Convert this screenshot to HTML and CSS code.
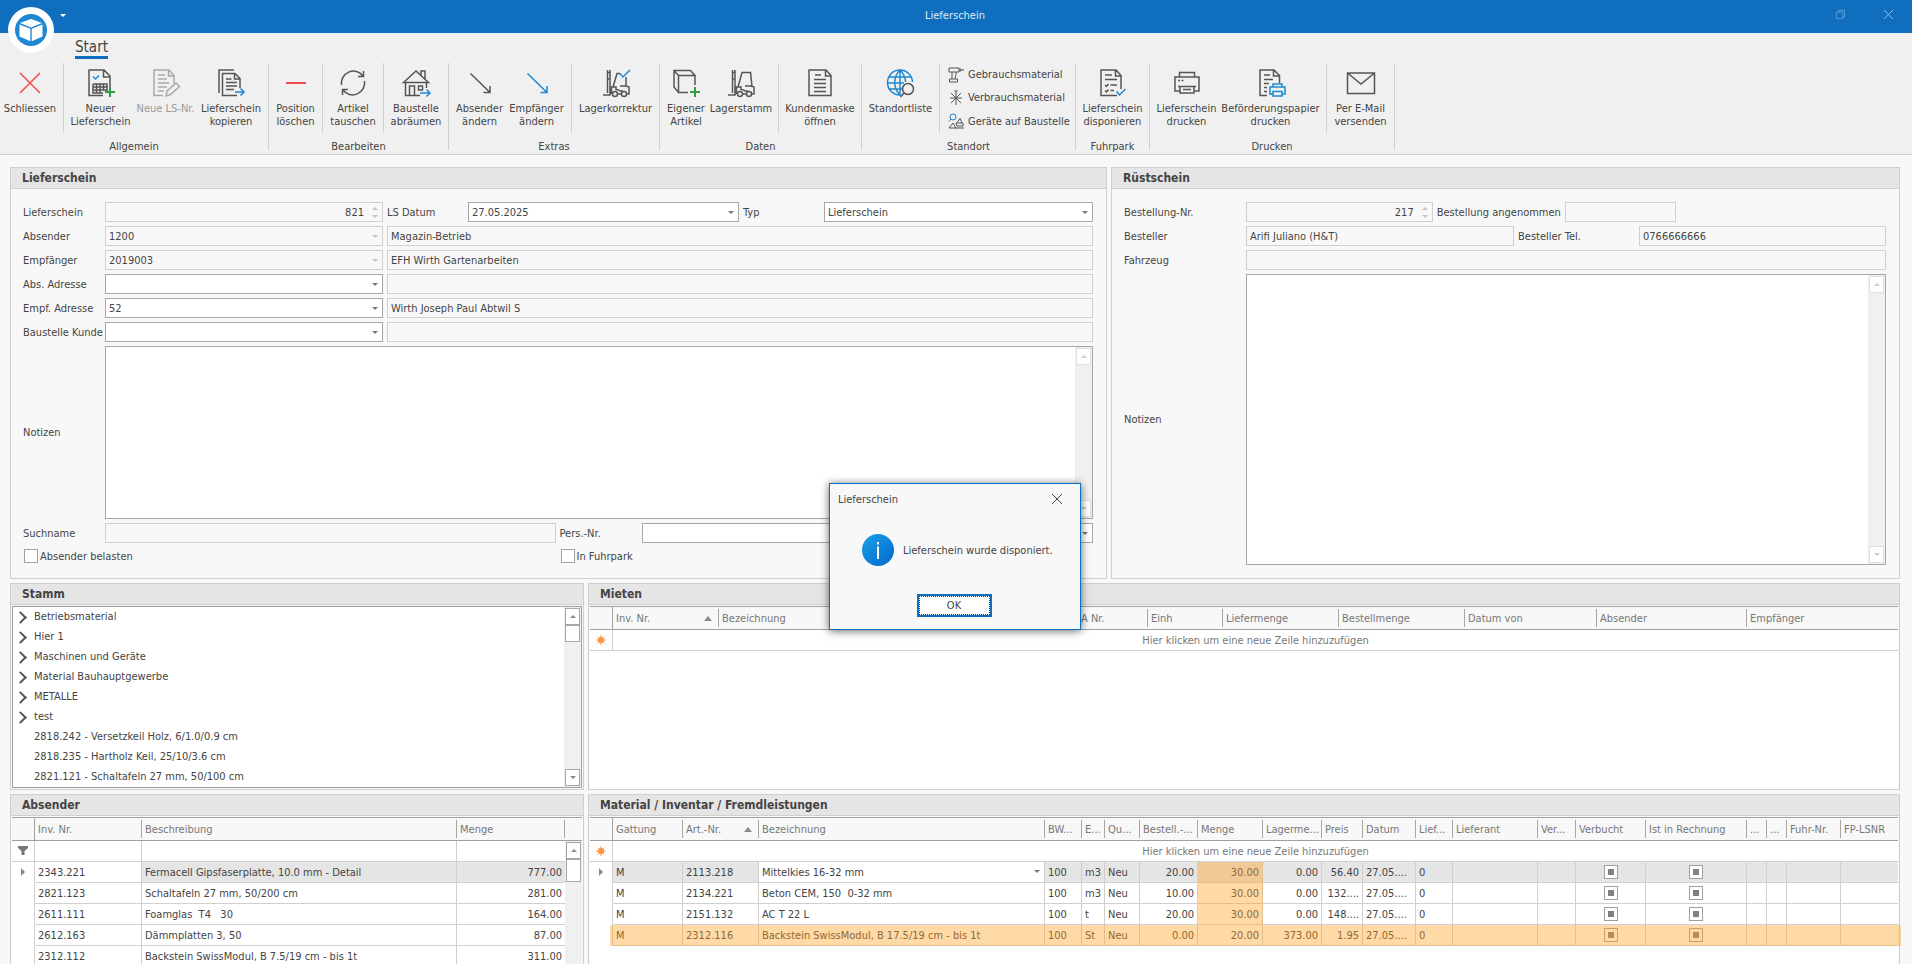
FILE: index.html
```
<!DOCTYPE html>
<html lang="de">
<head>
<meta charset="utf-8">
<title>Lieferschein</title>
<link rel="stylesheet" href="styles.css">
</head>
<body>
<header class="titlebar">
  <div class="titlebar-left">
    <svg class="logo" viewBox="0 0 46 46" aria-hidden="true"><circle cx="23" cy="23" r="23" fill="#fff"/><circle cx="23" cy="23" r="16" fill="#1e88d2"/><path d="M23 12l11 4-11 4.500-11-4.500zM11.500 17.500l10.800 4.300v12.500l-10.800-4.800zM34.500 17.500l-10.800 4.300v12.500l10.800-4.800z" fill="#fff"/></svg>
    <span class="caret caret-white"></span>
  </div>
  <h1 class="title">Lieferschein</h1>
  <div class="window-buttons">
    <button type="button" aria-label="Wiederherstellen"><svg viewBox="0 0 12 12"><path d="M1.500 3.500h7v7h-7zM3.500 3.500v-2h7v7h-2" /></svg></button>
    <button type="button" aria-label="Fenster schliessen"><svg class="bright" viewBox="0 0 12 12"><path d="M1 1l10 10M11 1L1 11"/></svg></button>
  </div>
</header>

<nav class="ribbon">
  <div class="tabs"><button type="button" class="tab">Start</button></div>
  <div class="groups">
    <section class="group">
      <div class="clusters">
        <div class="cluster cluster-first">
          <button type="button" class="tool w58"><svg viewBox="0 0 32 32" class="red"><path d="M6 6l20 20M26 6L6 26"/></svg>Schliessen</button>
        </div>
        <div class="cluster">
          <button type="button" class="tool w65"><svg viewBox="0 0 32 32"><path d="M18 28.500H4V3h15l6 6v12M18.500 3v7H25M8 17h14v9M8 17v9h10M8 20h14M8 23h14M11.500 17v9M15 17v9M18.500 17v6"/><path class="blue" d="M8 9.500l2.500 2.500L14 8.500"/><path class="green" d="M25 20v10M20 25h10"/></svg>Neuer<br>Lieferschein</button>
          <button type="button" class="tool w65" disabled><svg viewBox="0 0 32 32"><path d="M13 28.500H4V3h15l5 5.500v8M18.500 3v6H24M8 8h7M8 12h9M8 16h11M8 20h9M8 24h6M16 29l1-5 9-8 3.500 3.500-9 8z"/></svg>Neue LS-Nr.</button>
          <button type="button" class="tool w66"><svg viewBox="0 0 32 32"><path d="M19 3H4v23M22 28.500H7.500V6.500H20l5 5V21M19.500 6.500V12H25M11 12h5.500M11 15.500h11M11 19h11M11 22.500h8"/><path class="blue" d="M20 25h9M25.500 21.500L29 25l-3.500 3.500"/></svg>Lieferschein<br>kopieren</button>
        </div>
      </div>
      <h2>Allgemein</h2>
    </section>
    <section class="group">
      <div class="clusters">
        <div class="cluster">
          <button type="button" class="tool w45"><svg viewBox="0 0 32 32" class="red"><path d="M6 16h20" stroke-width="2"/></svg>Position<br>löschen</button>
        </div>
        <div class="cluster">
          <button type="button" class="tool w52"><svg viewBox="0 0 32 32"><path d="M4.500 18A12 12 0 0 1 26 9M27.500 14A12 12 0 0 1 6 23M26.500 4v5.500H21M5.500 28v-5.500H11"/></svg>Artikel<br>tauschen</button>
        </div>
        <div class="cluster">
          <button type="button" class="tool w56"><svg viewBox="0 0 32 32"><path d="M3.500 15.500L16 4l12.500 11.500zM21 8V4h4v7.500M5.500 16v12.500H20M26.500 16v5M9.500 28V19h5v9M18.500 19h4v4h-4z"/><path class="blue" d="M20 26h10M26.500 22.500L30 26l-3.500 3.500"/></svg>Baustelle<br>abräumen</button>
        </div>
      </div>
      <h2>Bearbeiten</h2>
    </section>
    <section class="group">
      <div class="clusters">
        <div class="cluster">
          <button type="button" class="tool w53"><svg viewBox="0 0 32 32"><path d="M6.500 6.500L25.500 25M26 19v6.500h-6.500"/></svg>Absender<br>ändern</button>
          <button type="button" class="tool w61"><svg viewBox="0 0 32 32"><path class="blue" d="M6.500 6.500L25.500 25M26 19v6.500h-6.500"/></svg>Empfänger<br>ändern</button>
        </div>
        <div class="cluster">
          <button type="button" class="tool w79"><svg viewBox="0 0 32 32"><path d="M3 28h7V3M7.500 3v23M7.500 5.500H10M7.500 12H10M13 20l4-13.500h3M11.500 27V20h4.500v2.500c2.500 0 3 .500 4 1.500h3M26 10v9l3 1v7h-2M18 27h3M20 19h6"/><circle cx="15" cy="27" r="2.500"/><circle cx="24" cy="27" r="2.500"/><path class="blue" d="M20 6.500L23 10l7-7"/></svg>Lagerkorrektur</button>
        </div>
      </div>
      <h2>Extras</h2>
    </section>
    <section class="group">
      <div class="clusters">
        <div class="cluster">
          <button type="button" class="tool w44"><svg viewBox="0 0 32 32"><path d="M18 25.500H8.500v-17H25V18M8.500 25.500L4 20V3.500h16.500l4.500 5M4 3.500l4.500 5"/><path class="green" d="M25 20v10M20 25h10"/></svg>Eigener<br>Artikel</button>
          <button type="button" class="tool w66"><svg viewBox="0 0 32 32"><path d="M3 28h7V3M7.500 3v23M7.500 5.500H10M7.500 12H10M13 20l4-14.500h8.500L27 19M11.500 27V20h4.500v2.500c2.500 0 3 .500 4 1.500h3M20 19h6l3 1v7h-2M18 27h3"/><circle cx="15" cy="27" r="2.500"/><circle cx="24" cy="27" r="2.500"/></svg>Lagerstamm</button>
        </div>
        <div class="cluster">
          <button type="button" class="tool w74"><svg viewBox="0 0 32 32"><path d="M5 3h17l5 5.500v20H5zM21.500 3v6H27M11 8h6M10 12.500h12M10 16.500h12M10 20.500h12M10 24.500h12"/></svg>Kundenmaske<br>öffnen</button>
        </div>
      </div>
      <h2>Daten</h2>
    </section>
    <section class="group">
      <div class="clusters">
        <div class="cluster">
          <button type="button" class="tool w69"><svg viewBox="0 0 32 32"><g class="blue"><path d="M16 28A12.500 12.500 0 1 1 27.500 15M15 3C8 10 8 21 15 28M15 3c4 4 5.500 8 5.500 12M15 3v25M4 10h22M3 16h16M4 22h13"/></g><circle cx="23" cy="22" r="5.500"/><path d="M19 26l-3.500 4"/></svg>Standortliste</button>
        </div>
        <div class="cluster cluster-list">
          <button type="button" class="tool-row"><svg viewBox="0 0 16 16"><path d="M1 1h10v4H1zM11 2h2v2h-2M13 3h3M4 5v7M8 5v2.500L7 12M1.500 12h8v3h-8z"/></svg>Gebrauchsmaterial</button>
          <button type="button" class="tool-row"><svg viewBox="0 0 16 16"><path d="M8 1v14M8 8L3 3M8 8l5-5M8 8l-5 5M8 8l5 5M2 8h12M6.500 1h3"/></svg>Verbrauchsmaterial</button>
          <button type="button" class="tool-row"><svg viewBox="0 0 16 16"><path d="M1 15l4-5 3 5zM9 9.500l3-4 2 4.500M8 10h7v3H9zM7 15h9"/><circle class="blue" cx="5" cy="4" r="3"/><path class="blue" d="M3 6L1 8.500"/></svg>Geräte auf Baustelle</button>
        </div>
      </div>
      <h2>Standort</h2>
    </section>
    <section class="group">
      <div class="clusters">
        <div class="cluster">
          <button type="button" class="tool w65"><svg viewBox="0 0 32 32"><path d="M20 28.500H4V3h15l5 5.500V22M18.500 3v6H24M8 8h7M8 12.500h12M13.500 18H20M13.500 23.500H17M8 18l1.500 1.500L11.500 17M8 23.500L9.500 25l2-2.500"/><path class="blue" d="M19.500 24.500l3 3.500 6-6"/></svg>Lieferschein<br>disponieren</button>
        </div>
      </div>
      <h2>Fuhrpark</h2>
    </section>
    <section class="group">
      <div class="clusters">
        <div class="cluster">
          <button type="button" class="tool w65"><svg viewBox="0 0 32 32"><path d="M8.500 10V5.500h15V10M9 24H4V10h24v14h-5M7 19.500h18M9 19.500v6.500h14v-6.500M12 22.500h8M7 13.500h2M10.500 13.500h2"/></svg>Lieferschein<br>drucken</button>
          <button type="button" class="tool w103"><svg viewBox="0 0 32 32"><path d="M12 28.500H5V3h14l5.500 5.500V16M18.500 3v6H24M9 8h6M9 12.500h9M9 16.500h5M9 20.500h3M9 24.500h3"/><path class="blue" d="M18 20v-3h9v3M18 27h-3v-7h15v7h-3M18 24.500h9V29h-9z"/></svg>Beförderungspapier<br>drucken</button>
        </div>
        <div class="cluster">
          <button type="button" class="tool w59"><svg viewBox="0 0 32 32"><path d="M2.500 6h27v20.500h-27zM2.500 6L16 17 29.500 6"/></svg>Per E-Mail<br>versenden</button>
        </div>
      </div>
      <h2>Drucken</h2>
    </section>
  </div>
</nav>

<main class="workspace">
  <div class="row row-forms">
    <section class="panel">
      <h3 class="panel-title">Lieferschein</h3>
      <div class="form form-delivery">
        <label for="ls">Lieferschein</label>
        <div class="field spin off"><input id="ls" class="num" value="821" disabled></div>
        <label for="datum">LS Datum</label>
        <div class="field combo"><input id="datum" value="27.05.2025"></div>
        <label for="typ">Typ</label>
        <div class="field combo"><select id="typ"><option>Lieferschein</option></select></div>

        <label for="abs">Absender</label>
        <div class="field combo off"><select id="abs" disabled><option>1200</option></select></div>
        <div class="field off span4"><input aria-label="Absender Name" value="Magazin-Betrieb" disabled></div>

        <label for="empf">Empfänger</label>
        <div class="field combo off"><select id="empf" disabled><option>2019003</option></select></div>
        <div class="field off span4"><input aria-label="Empfänger Name" value="EFH Wirth Gartenarbeiten" disabled></div>

        <label for="absadr">Abs. Adresse</label>
        <div class="field combo"><select id="absadr"><option></option></select></div>
        <div class="field off span4"><input aria-label="Abs. Adresse Name" disabled></div>

        <label for="empfadr">Empf. Adresse</label>
        <div class="field combo"><select id="empfadr"><option>52</option></select></div>
        <div class="field off span4"><input aria-label="Empf. Adresse Name" value="Wirth Joseph Paul Abtwil S" disabled></div>

        <label for="baust">Baustelle Kunde</label>
        <div class="field combo"><select id="baust"><option></option></select></div>
        <div class="field off span4"><input aria-label="Baustelle Kunde Name" disabled></div>

        <label for="notiz">Notizen</label>
        <div class="memo span5"><textarea id="notiz"></textarea><div class="scroll dim"><i class="up"></i><i class="down"></i></div></div>
      </div>
      <div class="form form-person">
        <label for="such">Suchname</label>
        <div class="field off"><input id="such" disabled></div>
        <label for="pers">Pers.-Nr.</label>
        <div class="field combo"><select id="pers"><option></option></select></div>
        <label class="check span2"><input type="checkbox">Absender belasten</label>
        <label class="check span2"><input type="checkbox">In Fuhrpark</label>
      </div>
    </section>

    <section class="panel">
      <h3 class="panel-title">Rüstschein</h3>
      <div class="form form-order">
        <label for="bnr">Bestellung-Nr.</label>
        <div class="inline inline-a">
          <div class="field spin off"><input id="bnr" class="num" value="217" disabled></div>
          <label for="bang">Bestellung angenommen</label>
          <div class="field off"><input id="bang" disabled></div>
        </div>
        <label for="best">Besteller</label>
        <div class="inline inline-b">
          <div class="field off"><input id="best" value="Arifi Juliano (H&amp;T)" disabled></div>
          <label for="tel">Besteller Tel.</label>
          <div class="field off"><input id="tel" value="0766666666" disabled></div>
        </div>
        <label for="fahr">Fahrzeug</label>
        <div class="field off"><input id="fahr" disabled></div>
        <label for="rnotiz">Notizen</label>
        <div class="memo"><textarea id="rnotiz"></textarea><div class="scroll dim"><i class="up"></i><i class="down"></i></div></div>
      </div>
    </section>
  </div>

  <div class="row row-stock">
    <section class="panel">
      <h3 class="panel-title">Stamm</h3>
      <div class="tree">
        <ul>
          <li class="node">Betriebsmaterial</li>
          <li class="node">Hier 1</li>
          <li class="node">Maschinen und Geräte</li>
          <li class="node">Material Bauhauptgewerbe</li>
          <li class="node">METALLE</li>
          <li class="node">test</li>
          <li>2818.242 - Versetzkeil Holz, 6/1.0/0.9 cm</li>
          <li>2818.235 - Hartholz Keil, 25/10/3.6 cm</li>
          <li>2821.121 - Schaltafeln 27 mm, 50/100 cm</li>
        </ul>
        <div class="scroll"><i class="up"></i><b></b><i class="down"></i></div>
      </div>
    </section>
    <section class="panel">
      <h3 class="panel-title">Mieten</h3>
      <div class="grid">
        <table>
          <colgroup><col class="c23"><col class="c106"><col><col class="c70"><col class="c75"><col class="c116"><col class="c126"><col class="c132"><col class="c150"><col class="c151"></colgroup>
          <thead><tr><th class="mark"></th><th class="sorted">Inv. Nr.</th><th>Bezeichnung</th><th>A Nr.</th><th>Einh</th><th>Liefermenge</th><th>Bestellmenge</th><th>Datum von</th><th>Absender</th><th>Empfänger</th></tr></thead>
          <tbody><tr class="new"><td class="mark"><svg class="star" viewBox="0 0 10 10"><circle cx="5" cy="5" r="2.600"/><path d="M5 0v10M0 5h10M1.500 1.500l7 7M8.500 1.500l-7 7"/></svg></td><td colspan="9">Hier klicken um eine neue Zeile hinzuzufügen</td></tr></tbody>
        </table>
      </div>
    </section>
  </div>

  <div class="row row-lists">
    <section class="panel">
      <h3 class="panel-title">Absender</h3>
      <div class="grid">
        <table>
          <colgroup><col class="c23"><col class="c107"><col><col class="c109"></colgroup>
          <thead><tr><th class="mark"></th><th>Inv. Nr.</th><th>Beschreibung</th><th>Menge</th></tr></thead>
          <tbody>
            <tr class="filter"><td class="mark"><svg class="funnel" viewBox="0 0 10 10"><path d="M0 0h10v2L6.500 5v4h-3V5L0 2z"/></svg></td><td></td><td></td><td></td></tr>
            <tr class="current"><td class="mark"><span class="pointer"></span></td><td class="plain">2343.221</td><td>Fermacell Gipsfaserplatte, 10.0 mm - Detail</td><td class="r">777.00</td></tr>
            <tr><td class="mark"></td><td>2821.123</td><td>Schaltafeln 27 mm, 50/200 cm</td><td class="r">281.00</td></tr>
            <tr><td class="mark"></td><td>2611.111</td><td>Foamglas&nbsp; T4 &nbsp; 30</td><td class="r">164.00</td></tr>
            <tr><td class="mark"></td><td>2612.163</td><td>Dämmplatten 3, 50</td><td class="r">87.00</td></tr>
            <tr><td class="mark"></td><td>2312.112</td><td>Backstein SwissModul, B 7.5/19 cm - bis 1t</td><td class="r">311.00</td></tr>
          </tbody>
        </table>
        <div class="side"><div class="side-head"></div><div class="scroll"><i class="up"></i><b class="long"></b></div></div>
      </div>
    </section>
    <section class="panel">
      <h3 class="panel-title">Material / Inventar / Fremdleistungen</h3>
      <div class="grid">
        <table>
          <colgroup><col class="c23"><col class="c70"><col class="c76"><col><col class="c37"><col class="c23"><col class="c35"><col class="c58"><col class="c65"><col class="c59"><col class="c41"><col class="c53"><col class="c37"><col class="c85"><col class="c38"><col class="c70"><col class="c101"><col class="c20"><col class="c20"><col class="c54"><col class="c57"></colgroup>
          <thead><tr><th class="mark"></th><th>Gattung</th><th class="sorted">Art.-Nr.</th><th>Bezeichnung</th><th>BW...</th><th>E...</th><th>Qu...</th><th>Bestell.-...</th><th>Menge</th><th>Lagerme...</th><th>Preis</th><th>Datum</th><th>Lief...</th><th>Lieferant</th><th>Ver...</th><th>Verbucht</th><th>Ist in Rechnung</th><th>...</th><th>...</th><th>Fuhr-Nr.</th><th>FP-LSNR</th></tr></thead>
          <tbody>
            <tr class="new"><td class="mark"><svg class="star" viewBox="0 0 10 10"><circle cx="5" cy="5" r="2.600"/><path d="M5 0v10M0 5h10M1.500 1.500l7 7M8.500 1.500l-7 7"/></svg></td><td colspan="20">Hier klicken um eine neue Zeile hinzuzufügen</td></tr>
            <tr class="current"><td class="mark"><span class="pointer"></span></td><td>M</td><td>2113.218</td><td class="plain editing">Mittelkies 16-32 mm</td><td>100</td><td>m3</td><td>Neu</td><td class="r">20.00</td><td class="r tint">30.00</td><td class="r">0.00</td><td class="r">56.40</td><td>27.05....</td><td>0</td><td></td><td></td><td class="c"><input type="checkbox" aria-label="Verbucht" class="mixed"></td><td class="c"><input type="checkbox" aria-label="Ist in Rechnung" class="mixed"></td><td></td><td></td><td></td><td></td></tr>
            <tr><td class="mark"></td><td>M</td><td>2134.221</td><td>Beton CEM, 150&nbsp; 0-32 mm</td><td>100</td><td>m3</td><td>Neu</td><td class="r">10.00</td><td class="r tint">30.00</td><td class="r">0.00</td><td class="r">132....</td><td>27.05....</td><td>0</td><td></td><td></td><td class="c"><input type="checkbox" aria-label="Verbucht" class="mixed"></td><td class="c"><input type="checkbox" aria-label="Ist in Rechnung" class="mixed"></td><td></td><td></td><td></td><td></td></tr>
            <tr><td class="mark"></td><td>M</td><td>2151.132</td><td>AC T 22 L</td><td>100</td><td>t</td><td>Neu</td><td class="r">20.00</td><td class="r tint">30.00</td><td class="r">0.00</td><td class="r">148....</td><td>27.05....</td><td>0</td><td></td><td></td><td class="c"><input type="checkbox" aria-label="Verbucht" class="mixed"></td><td class="c"><input type="checkbox" aria-label="Ist in Rechnung" class="mixed"></td><td></td><td></td><td></td><td></td></tr>
            <tr class="tinted"><td class="mark"></td><td class="tint first">M</td><td class="tint">2312.116</td><td class="tint">Backstein SwissModul, B 17.5/19 cm - bis 1t</td><td class="tint">100</td><td class="tint">St</td><td class="tint">Neu</td><td class="r tint">0.00</td><td class="r tint">20.00</td><td class="r tint">373.00</td><td class="r tint">1.95</td><td class="tint">27.05....</td><td class="tint">0</td><td class="tint"></td><td class="tint"></td><td class="c tint"><input type="checkbox" aria-label="Verbucht" class="mixed"></td><td class="c tint"><input type="checkbox" aria-label="Ist in Rechnung" class="mixed"></td><td class="tint"></td><td class="tint"></td><td class="tint"></td><td class="tint last"></td></tr>
          </tbody>
        </table>
      </div>
    </section>
  </div>
</main>

<dialog open class="message" aria-labelledby="msg-title">
  <div class="message-head">
    <h2 id="msg-title">Lieferschein</h2>
    <button type="button" aria-label="Schliessen"><svg viewBox="0 0 12 12"><path d="M1 1l10 10M11 1L1 11"/></svg></button>
  </div>
  <div class="message-body">
    <svg class="info" viewBox="0 0 32 32" aria-hidden="true"><defs><linearGradient id="ig" x1="0" y1="0" x2="1" y2="1"><stop offset="0" stop-color="#1ba1e8"/><stop offset="1" stop-color="#0068cc"/></linearGradient></defs><circle cx="16" cy="16" r="16" fill="url(#ig)"/><path d="M15 8h2v2.500h-2zM15 12.500h2V25h-2z" fill="#fff"/></svg>
    <p>Lieferschein wurde disponiert.</p>
  </div>
  <div class="message-foot"><button type="button" class="ok">OK</button></div>
</dialog>
</body>
</html>
```
FILE: styles.css
```
* { box-sizing: border-box; }

body {
  margin: 0;
  height: 100vh;
  overflow: hidden;
  display: flex;
  flex-direction: column;
  position: relative;
  background: #f8f8f8;
  color: #444;
  font: 11px/13px "DejaVu Sans Condensed", "DejaVu Sans", sans-serif;
}

button, input, select, textarea { font: inherit; color: inherit; }
button { border: 0; background: none; padding: 0; }
h1, h2, h3, p, ul { margin: 0; padding: 0; font-size: 11px; font-weight: normal; }
svg { display: block; fill: none; stroke: none; }

/* Title bar */
.titlebar {
  display: grid;
  grid-template-columns: 1fr auto 1fr;
  align-items: center;
  height: 33px;
  flex: none;
  padding: 0 16px 0 8px;
  background: #106ebe;
  color: #dcebf8;
}
.titlebar-left { display: flex; gap: 6px; height: 33px; padding-top: 7px; position: relative; z-index: 1; }
.logo { width: 46px; height: 46px; flex: none; }
.caret { width: 0; height: 0; border: 3px solid transparent; border-top-color: #888; border-bottom: 0; }
.caret-white { border-top-color: #fff; margin-top: 7px; }
.title { padding: 0 0 3px 6px; }
.window-buttons { display: flex; justify-content: flex-end; gap: 33px; }
.window-buttons button { padding: 0 2px 4px; }
.window-buttons svg { width: 11px; height: 11px; stroke: #5f9fd8; }
.window-buttons .bright { stroke: #9cc4e8; }

/* Ribbon */
.ribbon { flex: none; background: #f0f0f0; border-bottom: 1px solid #d0d0d0; }
.tabs { display: flex; padding: 5px 0 0 75px; height: 30px; }
.tab { height: 21px; font-size: 15px; line-height: 18px; border-bottom: 3px solid #106ebe; }
.groups { display: flex; height: 91px; }
.group { height: 87px; display: flex; flex-direction: column; border-right: 1px solid #d0d0d0; }
.clusters { display: flex; height: 70px; }
.cluster { display: flex; padding: 0 4px; border-right: 1px solid #d0d0d0; }
.cluster:last-child { border-right: 0; }
.cluster-first { padding-left: 1px; }
.group h2 { text-align: center; padding-top: 7px; }
.tool {
  display: flex;
  flex-direction: column;
  align-items: center;
  height: 70px;
  padding-top: 4px;
  text-align: center;
  white-space: nowrap;
}
.tool svg { width: 32px; height: 32px; margin: 0 auto 3px; }
.tool svg, .tool-row svg { stroke: #555; stroke-width: 1.5; }
.ribbon svg.red { stroke: #ef4b4b; }
.blue { stroke: #1e88d2; }
.green { stroke: #2f9e44; stroke-width: 2; }
.tool:disabled { color: #999; }
.tool:disabled svg { stroke: #aaa; }
.w44 { width: 44px; } .w45 { width: 45px; } .w52 { width: 52px; } .w53 { width: 53px; }
.w56 { width: 56px; } .w58 { width: 58px; } .w59 { width: 59px; } .w61 { width: 61px; }
.w65 { width: 65px; } .w66 { width: 66px; } .w69 { width: 69px; } .w74 { width: 74px; }
.w79 { width: 79px; } .w103 { width: 103px; }
.cluster-list { flex-direction: column; width: 135px; padding-left: 8px; }
.tool-row { display: flex; align-items: center; gap: 4px; height: 24px; white-space: nowrap; }
.tool-row svg { width: 16px; height: 16px; stroke-width: 1; flex: none; }

/* Workspace */
.workspace { flex: 1; min-height: 0; display: flex; flex-direction: column; gap: 4px; padding: 12px 12px 0 10px; }
.row { display: grid; gap: 4px; flex: none; }
.row-forms { grid-template-columns: minmax(0, 1097fr) minmax(0, 789fr); }
.row-stock, .row-lists { grid-template-columns: minmax(0, 574fr) minmax(0, 1312fr); }
.row-stock { height: 207px; }
.row-lists { flex: 1; }
.row-lists .panel { border-bottom: 0; }
.panel { border: 1px solid #cfcfcf; display: flex; flex-direction: column; min-height: 0; }
.panel-title {
  flex: none;
  height: 21px;
  padding: 0 11px;
  line-height: 20px;
  font-size: 12px;
  font-weight: bold;
  background: #e5e5e5;
  border-bottom: 1px solid #cfcfcf;
}

/* Forms */
.form { display: grid; gap: 4px; align-items: center; padding: 0 13px 0 12px; white-space: nowrap; }
.form-delivery {
  padding-top: 13px;
  grid-template-columns: 78px minmax(0, 278fr) 77px minmax(0, 271fr) 77px minmax(0, 269fr);
}
.form-person {
  padding-top: 4px;
  padding-bottom: 13px;
  grid-template-columns: 78px minmax(0, 451fr) 78px minmax(0, 452fr);
}
.form-order {
  flex: 1;
  padding-top: 13px;
  padding-bottom: 13px;
  grid-template-columns: 118px minmax(0, 1fr);
  grid-template-rows: 20px 20px 20px 1fr;
}
.inline { display: grid; gap: 4px; align-items: center; }
.inline-a { grid-template-columns: 189fr auto 112fr 209fr; }
.inline-b { grid-template-columns: 268fr 117px 247fr; }
.span2 { grid-column: span 2; }
.span4 { grid-column: span 4; }
.span5 { grid-column: span 5; }
.field { position: relative; height: 20px; background: #fff; border: 1px solid #a6a6a6; }
.field input, .field select {
  display: block;
  width: 100%;
  height: 18px;
  padding: 0 3px;
  border: 0;
  background: none;
  appearance: none;
  opacity: 1;
  outline: 0;
}
.field.off { background: #f8f8f8; border-color: #d0d0d0; }
.field .num { text-align: right; padding-right: 18px; }
.combo::after, .spin::after, .spin::before, .editing::after {
  content: "";
  position: absolute;
  right: 4px;
  top: 8px;
  border: 3px solid transparent;
  border-top-color: #777;
  border-bottom: 0;
}
.off::after { border-top-color: #c4c4c4; }
.spin::after { top: 12px; }
.spin::before { top: 4px; border-top: 0; border-bottom: 3px solid #c4c4c4; }
.memo { display: flex; background: #fff; border: 1px solid #a6a6a6; height: 173px; }
.memo textarea { flex: 1; min-width: 0; border: 0; resize: none; background: none; outline: 0; }
.form-order .memo { height: 100%; min-height: 100px; }
.check { display: flex; align-items: center; gap: 2px; height: 18px; padding-left: 1px; }
input[type="checkbox"] { appearance: none; width: 14px; height: 14px; margin: 0; background: #fff; border: 1px solid #a0a0a0; flex: none; }

/* Scroll bars */
.scroll { width: 17px; flex: none; background: #f0f0f0; padding: 1px; display: flex; flex-direction: column; }
.scroll i, .scroll b { background: #fff; border: 1px solid #a6a6a6; height: 17px; display: flex; align-items: center; justify-content: center; flex: none; }
.scroll .long { height: 23px; }
.scroll i::after { content: ""; border: 3px solid transparent; }
.scroll .up::after { border-top: 0; border-bottom-color: #888; }
.scroll .down::after { border-bottom: 0; border-top-color: #888; }
.scroll .down { margin-top: auto; }
.dim i { border-color: #e0e0e0; }
.dim .up::after { border-bottom-color: #ccc; }
.dim .down::after { border-top-color: #ccc; }

/* Tree */
.tree { flex: 1; min-height: 0; margin: 1px; display: flex; background: #fff; border: 1px solid #a0a0a0; }
.tree ul { flex: 1; list-style: none; padding: 0 0 0 21px; overflow: hidden; }
.tree li { height: 20px; line-height: 20px; position: relative; }
.node::before {
  content: "";
  position: absolute;
  left: -18px;
  top: 6px;
  width: 7px;
  height: 7px;
  border: solid #555;
  border-width: 2px 2px 0 0;
  transform: rotate(45deg);
}

/* Data grids */
.grid { flex: 1; min-height: 0; margin: 1px 1px 0; background: #fff; border-top: 1px solid #a0a0a0; display: flex; align-items: flex-start; }
table { flex: 1; width: 100%; min-width: 0; table-layout: fixed; border-collapse: separate; border-spacing: 0; }
th, td { padding: 0 3px; text-align: left; white-space: nowrap; overflow: hidden; height: 21px; border-bottom: 1px solid #d0d0d0; }
th {
  height: 23px;
  font-weight: normal;
  color: #777;
  border-bottom-color: #a0a0a0;
  background: linear-gradient(#a6a6a6, #a6a6a6) right center / 1px 18px no-repeat #f8f8f8;
}
th.mark { background: #f8f8f8; border-right: 1px solid #a0a0a0; }
.row-stock th:last-child, .row-lists .panel:last-child th:last-child { background: #f8f8f8; }
th.sorted { position: relative; }
th.sorted::after { content: ""; position: absolute; right: 7px; top: 9px; border: 4px solid transparent; border-top: 0; border-bottom: 5px solid #888; }
td { border-right: 1px solid #d0d0d0; }
tr td:last-child { border-right: 0; }
td.mark { padding: 0; border-bottom-color: transparent; }
.new td { text-align: center; color: #777; }
.new td.mark, .filter td.mark { border-bottom-color: #d0d0d0; }
.current td { background: #e5e5e5; }
.current td.mark, .current td.plain { background: #fff; }
.editing { position: relative; }
.r { text-align: right; }
.c input { display: block; margin: 0 auto; }
.c .mixed { background: linear-gradient(#808080, #808080) center / 6px 6px no-repeat #fff; }
.tint { position: relative; overflow: visible; }
.tint::after { content: ""; position: absolute; inset: 0 -1px -1px 0; background: rgba(255, 160, 32, .4); }
.tint.first::after { left: -3px; }
.tint.last::after { right: -3px; }
.star { width: 10px; height: 10px; margin: 0 auto; fill: #f79646; stroke: #f79646; stroke-width: 1; }
.funnel { width: 10px; height: 10px; margin: 0 auto; fill: #777; }
.pointer { display: block; width: 0; height: 0; margin: 0 auto; border: 4px solid transparent; border-left-color: #888; border-right: 0; }
.side { align-self: stretch; width: 17px; display: flex; flex-direction: column; }
.side-head { height: 23px; background: #f8f8f8; border-bottom: 1px solid #a0a0a0; }
.side .scroll { flex: 1; }
.c20 { width: 20px; } .c23 { width: 23px; } .c35 { width: 35px; } .c37 { width: 37px; }
.c38 { width: 38px; } .c41 { width: 41px; } .c53 { width: 53px; } .c54 { width: 54px; }
.c57 { width: 57px; } .c58 { width: 58px; } .c59 { width: 59px; } .c65 { width: 65px; }
.c70 { width: 70px; } .c75 { width: 75px; } .c76 { width: 76px; } .c85 { width: 85px; }
.c101 { width: 101px; } .c106 { width: 106px; } .c107 { width: 107px; } .c109 { width: 108px; }
.c116 { width: 116px; } .c126 { width: 126px; } .c132 { width: 132px; } .c150 { width: 150px; }
.c151 { width: 151px; }

/* Message box */
.message {
  position: absolute;
  top: 483px;
  left: 50%;
  right: auto;
  margin: 0 0 0 -127px;
  padding: 0;
  width: 252px;
  color: inherit;
  background: #f8f8f8;
  border: 1px solid #106ebe;
  box-shadow: 0 1px 8px rgba(0, 0, 0, .6);
}
.message-head { display: flex; justify-content: space-between; align-items: center; height: 30px; padding: 0 17px 0 8px; }
.message-head svg { width: 12px; height: 12px; stroke: #444; }
.message-body { display: flex; align-items: center; gap: 9px; padding: 20px 0 28px 32px; white-space: nowrap; }
.info { width: 32px; height: 32px; }
.message-foot { display: flex; justify-content: center; padding: 0 2px 12px 0; }
.ok { width: 75px; height: 23px; background: #fff; border: 2px solid #106ebe; outline: 1px dotted #333; outline-offset: -3px; }
```
